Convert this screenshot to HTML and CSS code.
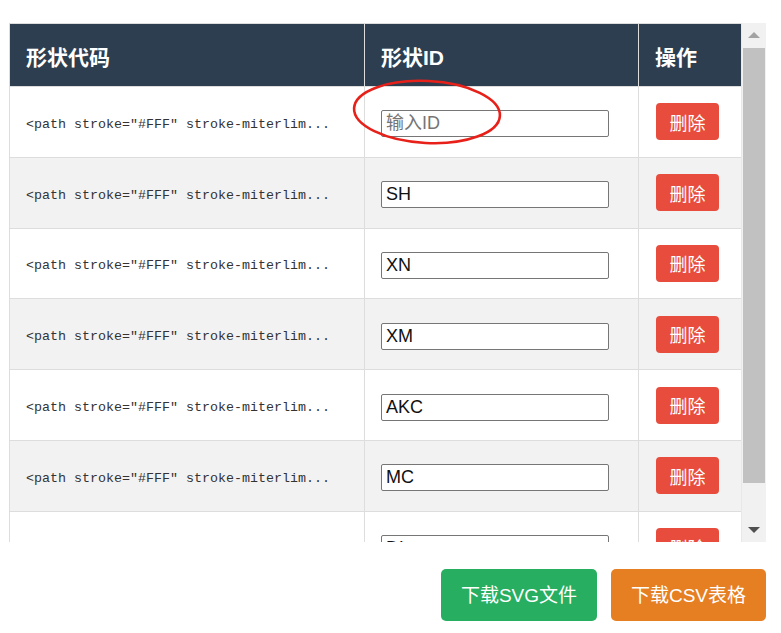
FILE: index.html
```html
<!DOCTYPE html>
<html lang="zh-CN">
<head>
<meta charset="utf-8">
<title>形状列表</title>
<link rel="stylesheet" href="styles.css">
</head>
<body>
<div class="page">
  <div class="scroll-box">
    <div class="table-wrap">
      <table class="shape-table">
        <colgroup>
          <col class="c-code">
          <col class="c-id">
          <col class="c-op">
        </colgroup>
        <thead>
          <tr><th>形状代码</th><th>形状ID</th><th>操作</th></tr>
        </thead>
        <tbody>
          <tr><td class="code">&lt;path stroke=″#FFF″ stroke-miterlim...</td><td><input class="id-input" type="text" placeholder="输入ID" value=""></td><td><button class="del">删除</button></td></tr>
          <tr><td class="code">&lt;path stroke=″#FFF″ stroke-miterlim...</td><td><input class="id-input" type="text" value="SH"></td><td><button class="del">删除</button></td></tr>
          <tr><td class="code">&lt;path stroke=″#FFF″ stroke-miterlim...</td><td><input class="id-input" type="text" value="XN"></td><td><button class="del">删除</button></td></tr>
          <tr><td class="code">&lt;path stroke=″#FFF″ stroke-miterlim...</td><td><input class="id-input" type="text" value="XM"></td><td><button class="del">删除</button></td></tr>
          <tr><td class="code">&lt;path stroke=″#FFF″ stroke-miterlim...</td><td><input class="id-input" type="text" value="AKC"></td><td><button class="del">删除</button></td></tr>
          <tr><td class="code">&lt;path stroke=″#FFF″ stroke-miterlim...</td><td><input class="id-input" type="text" value="MC"></td><td><button class="del">删除</button></td></tr>
          <tr><td class="code">&lt;path stroke=″#FFF″ stroke-miterlim...</td><td><input class="id-input" type="text" value="DL"></td><td><button class="del">删除</button></td></tr>
        </tbody>
      </table>
    </div>
    <div class="scrollbar" aria-hidden="true">
      <div class="sb-btn"><span class="arrow-up"></span></div>
      <div class="sb-track"><div class="sb-thumb"></div></div>
      <div class="sb-btn"><span class="arrow-down"></span></div>
    </div>
  </div>
  <div class="actions">
    <button class="btn btn-svg">下载SVG文件</button>
    <button class="btn btn-csv">下载CSV表格</button>
  </div>
</div>
<svg class="mark" width="160" height="74" viewBox="0 0 160 74" aria-hidden="true">
  <ellipse cx="77" cy="34" rx="73" ry="31" transform="rotate(3 77 34)" fill="none" stroke="#e8201a" stroke-width="2.6"/>
</svg>
</body>
</html>
```

FILE: styles.css
```css
html, body {
  margin: 0;
  padding: 0;
  background: #ffffff;
}

body {
  font-family: "Liberation Sans", "Noto Sans CJK SC", sans-serif;
  color: #333333;
}

.page {
  padding: 23px 15px 12px 9px;
}

.scroll-box {
  display: flex;
  height: 519px;
}

.table-wrap {
  flex: 1;
  overflow: hidden;
}

.scrollbar {
  width: 25px;
  flex: none;
  display: flex;
  flex-direction: column;
  background: #f1f1f1;
  border-left: 1px solid #e8e8e8;
  box-sizing: border-box;
}

.sb-btn {
  height: 25px;
  flex: none;
  display: flex;
  align-items: center;
  justify-content: center;
}

.arrow-up {
  width: 0;
  height: 0;
  border-left: 6px solid transparent;
  border-right: 6px solid transparent;
  border-bottom: 6px solid #a3a3a3;
  margin-top: -1px;
}

.arrow-down {
  width: 0;
  height: 0;
  border-left: 6px solid transparent;
  border-right: 6px solid transparent;
  border-top: 6px solid #505050;
  margin-top: 1px;
}

.sb-track {
  flex: 1;
  min-height: 0;
  padding: 0 1px 0 1px;
}

.sb-thumb {
  height: 435px;
  background: #c1c1c1;
}

.shape-table {
  width: 732px;
  border-collapse: collapse;
  border: 1px solid #dddddd;
  table-layout: fixed;
}

.c-code { width: 355px; }
.c-id { width: 274px; }
.c-op { width: 103px; }

.shape-table th,
.shape-table td {
  border: 1px solid #dddddd;
  text-align: left;
  vertical-align: middle;
  padding: 0 16px;
}

.shape-table thead tr {
  height: 63px;
}

.shape-table th {
  background: #2c3e50;
  color: #ffffff;
  font-size: 21px;
  font-weight: bold;
  padding-top: 1px;
}

.shape-table tbody tr {
  height: 70.8px;
  background: #ffffff;
}

.shape-table tbody tr:nth-child(even) {
  background: #f2f2f2;
}

.shape-table td.code {
  font-family: "Liberation Mono", "Noto Sans CJK SC", monospace;
  font-size: 13.33px;
  color: #333333;
  white-space: nowrap;
  overflow: hidden;
  padding-top: 5px;
}

.id-input {
  display: block;
  box-sizing: border-box;
  width: 228px;
  height: 27px;
  margin: 4px 0 0;
  padding: 0 4px;
  border: 1px solid #767676;
  border-radius: 2px;
  background: #ffffff;
  font-family: "Liberation Sans", "Noto Sans CJK SC", sans-serif;
  font-size: 18px;
  color: #111111;
}

.id-input::placeholder {
  color: #757575;
}

.del {
  display: block;
  box-sizing: border-box;
  width: 63px;
  height: 37px;
  padding: 0;
  margin: 0 0 0 1px;
  border: none;
  border-radius: 4px;
  background: #e74c3c;
  color: #ffffff;
  font-family: "Liberation Sans", "Noto Sans CJK SC", sans-serif;
  font-size: 18px;
  cursor: pointer;
}

.actions {
  display: flex;
  justify-content: flex-end;
  gap: 14px;
  margin-top: 27px;
}

.btn {
  box-sizing: border-box;
  height: 52px;
  padding: 0 19px 3px;
  border: none;
  border-radius: 5px;
  color: #ffffff;
  font-family: "Liberation Sans", "Noto Sans CJK SC", sans-serif;
  font-size: 19px;
  cursor: pointer;
}

.btn-svg {
  width: 156px;
  background: #27ae60;
}

.btn-csv {
  width: 155px;
  background: #e67e22;
}

.mark {
  position: absolute;
  left: 350px;
  top: 78px;
  pointer-events: none;
}
```
